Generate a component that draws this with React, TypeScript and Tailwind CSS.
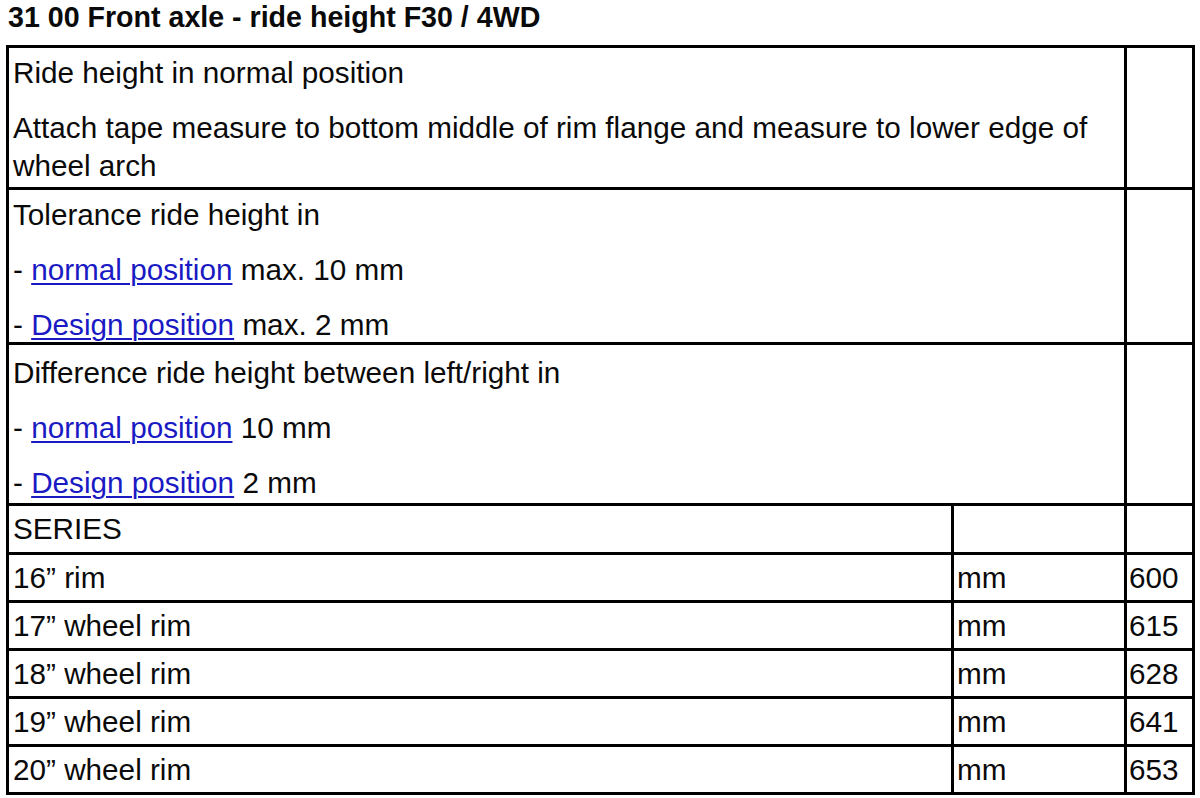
import React from "react";

const Link = ({ children }: { children: React.ReactNode }) => (
  <span className="text-[#1a1ac4] underline decoration-[2px] underline-offset-[3px]">{children}</span>
);

const rims = [
  { label: "16\u201d rim", value: "600" },
  { label: "17\u201d wheel rim", value: "615" },
  { label: "18\u201d wheel rim", value: "628" },
  { label: "19\u201d wheel rim", value: "641" },
  { label: "20\u201d wheel rim", value: "653" },
];

function TallRow({ height, pad, children }: { height: string; pad: string; children: React.ReactNode }) {
  return (
    <div className={`flex border-b-[3px] border-black ${height}`}>
      <div className={`flex-1 border-r-[3px] border-black pl-[4px] ${pad} flex flex-col gap-[17px]`}>
        {children}
      </div>
      <div className="w-[65px]" />
    </div>
  );
}

function DataRow({ label, unit, value, height, last }: { label: string; unit?: string; value?: string; height: string; last?: boolean }) {
  return (
    <div className={`flex ${height} ${last ? "" : "border-b-[3px] border-black"}`}>
      <div className="w-[945px] border-r-[3px] border-black pl-[4px] flex items-center">{label}</div>
      <div className="flex-1 border-r-[3px] border-black pl-[3px] flex items-center">{unit}</div>
      <div className="w-[65px] pl-[2px] flex items-center">{value}</div>
    </div>
  );
}

export default function App() {
  return (
    <div className="w-[1200px] h-[798px] bg-white text-[#0a0a0a] font-['Liberation_Sans',Arial,sans-serif] overflow-hidden">
      <div className="h-[45px] pl-[8px] text-[28.6px] font-bold leading-[34px]">
        31 00 Front axle - ride height F30 / 4WD
      </div>
      <div className="ml-[6px] w-[1189px] border-[3px] border-black text-[29.7px] leading-[38px]">
        <TallRow height="h-[142px]" pad="pt-[6px]">
          <p>Ride height in normal position</p>
          <p className="pr-[20px]">
            Attach tape measure to bottom middle of rim flange and measure to lower edge of wheel arch
          </p>
        </TallRow>
        <TallRow height="h-[155px]" pad="pt-[6px]">
          <p>Tolerance ride height in</p>
          <p>
            - <Link>normal position</Link> max. 10 mm
          </p>
          <p>
            - <Link>Design position</Link> max. 2 mm
          </p>
        </TallRow>
        <TallRow height="h-[161px]" pad="pt-[9px]">
          <p>Difference ride height between left/right in</p>
          <p>
            - <Link>normal position</Link> 10 mm
          </p>
          <p>
            - <Link>Design position</Link> 2 mm
          </p>
        </TallRow>
        <DataRow label="SERIES" height="h-[49px]" />
        {rims.map((r, i) => (
          <DataRow
            key={r.value}
            label={r.label}
            unit="mm"
            value={r.value}
            height={i === rims.length - 1 ? "h-[45px]" : "h-[48px]"}
            last={i === rims.length - 1}
          />
        ))}
      </div>
    </div>
  );
}
